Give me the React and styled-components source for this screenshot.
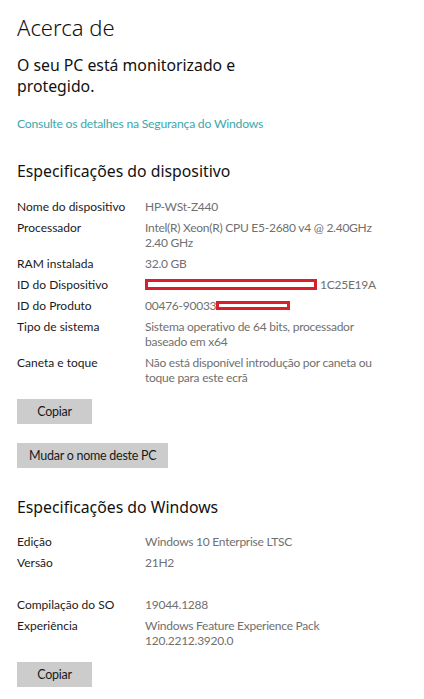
import React from 'react';
import styled, { createGlobalStyle } from 'styled-components';

const GlobalStyle = createGlobalStyle`
  body {
    margin: 0;
    background: #ffffff;
    font-family: "Noto Sans", "Open Sans", sans-serif;
    color: #1a1a1a;
  }
`;

const Page = styled.div`
  padding: 12px 17px 20px;
  width: 424px;
  box-sizing: border-box;
`;

const Title = styled.h1`
  margin: 0;
  font-size: 22px;
  font-weight: 300;
  line-height: 30px;
  color: #111;
`;

const Status = styled.p`
  margin: 13px 0 0;
  max-width: 250px;
  font-size: 15.8px;
  line-height: 21px;
  font-weight: 400;
  color: #111;
`;

const Link = styled.a`
  display: block;
  margin-top: 19px;
  font-family: Lato, "Noto Sans", sans-serif;
  font-size: 12.2px;
  line-height: 16px;
  letter-spacing: -0.22px;
  color: #3aa8ad;
  text-decoration: none;
`;

const Section = styled.section`
  margin-top: ${(p) => p.$top}px;
`;

const Heading = styled.h2`
  margin: 0;
  font-size: 15.8px;
  font-weight: 400;
  line-height: 24px;
  color: #111;
`;

const SpecList = styled.dl`
  display: grid;
  grid-template-columns: 128px 1fr;
  row-gap: 6px;
  margin: ${(p) => p.$top}px 0 0;
  font-family: Lato, "Noto Sans", sans-serif;
  font-size: 12px;
  line-height: 15px;
`;

const Label = styled.dt`
  margin: 0;
  color: #1a1a1a;
`;

const Value = styled.dd`
  margin: 0;
  color: #707070;
  letter-spacing: -0.25px;
`;

const Line = styled.span`
  display: block;
  white-space: nowrap;
`;

const Blank = styled.div`
  grid-column: 1 / -1;
  height: 15px;
`;

const Redacted = styled.span`
  display: inline-block;
  box-sizing: border-box;
  width: ${(p) => p.$w}px;
  height: ${(p) => p.$h}px;
  border: 3px solid #d8202c;
  background: #ffffff;
  vertical-align: ${(p) => p.$shift}px;
  margin-right: ${(p) => p.$gap || 0}px;
`;

const Button = styled.button`
  display: block;
  min-width: 75px;
  height: 25px;
  margin-top: ${(p) => p.$top}px;
  padding: 0 12px;
  border: none;
  background: #cccccc;
  font-family: Lato, "Noto Sans", sans-serif;
  font-size: 12.5px;
  letter-spacing: -0.25px;
  color: #1a1a1a;
  cursor: pointer;
`;

const deviceSpecs = [
  { label: 'Nome do dispositivo', lines: ['HP-WSt-Z440'] },
  { label: 'Processador', lines: ['Intel(R) Xeon(R) CPU E5-2680 v4 @ 2.40GHz', '2.40 GHz'] },
  { label: 'RAM instalada', lines: ['32.0 GB'] },
  {
    label: 'ID do Dispositivo',
    lines: [
      <>
        <Redacted $w={172} $h={11} $shift={-1} $gap={3} />
        1C25E19A
      </>,
    ],
  },
  {
    label: 'ID do Produto',
    lines: [
      <>
        00476-90033
        <Redacted $w={74} $h={9} $shift={0} />
      </>,
    ],
  },
  { label: 'Tipo de sistema', lines: ['Sistema operativo de 64 bits, processador', 'baseado em x64'] },
  { label: 'Caneta e toque', lines: ['Não está disponível introdução por caneta ou', 'toque para este ecrã'] },
];

const windowsSpecs = [
  { label: 'Edição', lines: ['Windows 10 Enterprise LTSC'] },
  { label: 'Versão', lines: ['21H2'] },
  { blank: true },
  { label: 'Compilação do SO', lines: ['19044.1288'] },
  { label: 'Experiência', lines: ['Windows Feature Experience Pack', '120.2212.3920.0'] },
];

function Specs({ items, top }) {
  return (
    <SpecList $top={top}>
      {items.map((item, i) => (item.blank ? (
        <Blank key={i} />
      ) : (
        <React.Fragment key={item.label}>
          <Label>{item.label}</Label>
          <Value>
            {item.lines.map((line, j) => <Line key={j}>{line}</Line>)}
          </Value>
        </React.Fragment>
      )))}
    </SpecList>
  );
}

export default function App() {
  return (
    <>
      <GlobalStyle />
      <Page>
        <Title>Acerca de</Title>
        <Status>O seu PC está monitorizado e protegido.</Status>
        <Link href="#">Consulte os detalhes na Segurança do Windows</Link>

        <Section $top={27}>
          <Heading>Especificações do dispositivo</Heading>
          <Specs items={deviceSpecs} top={16} />
          <Button $top={14}>Copiar</Button>
          <Button $top={19}>Mudar o nome deste PC</Button>
        </Section>

        <Section $top={27}>
          <Heading>Especificações do Windows</Heading>
          <Specs items={windowsSpecs} top={15} />
          <Button $top={14}>Copiar</Button>
        </Section>
      </Page>
    </>
  );
}
